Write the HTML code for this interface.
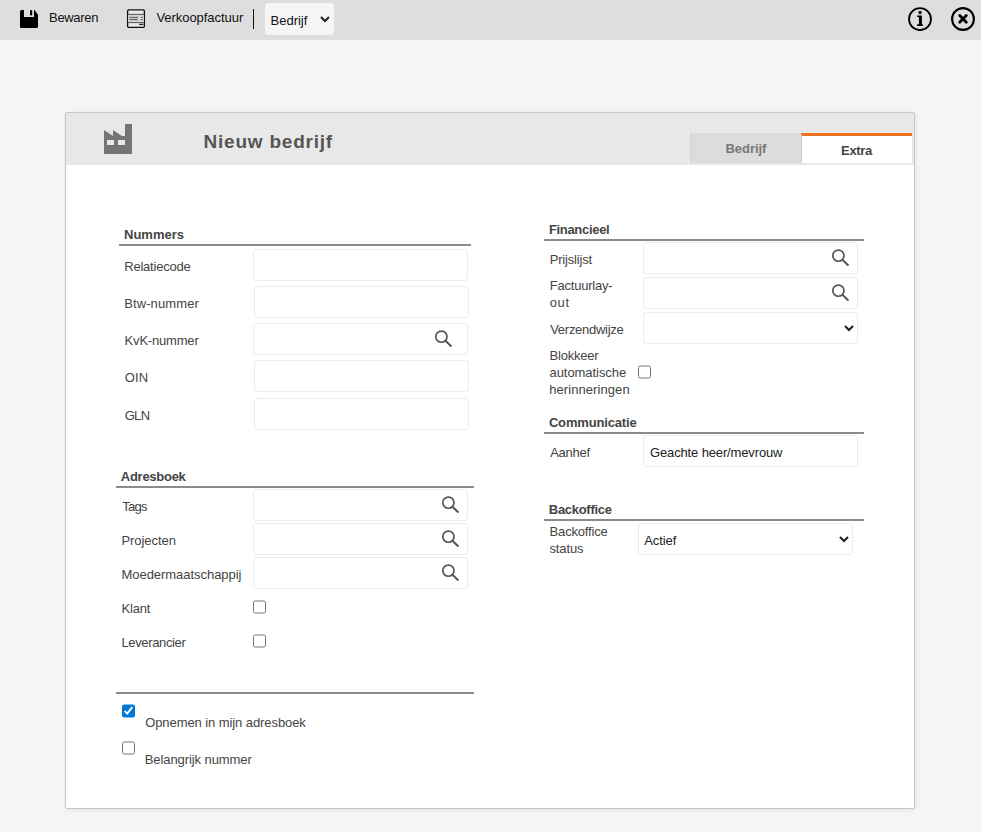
<!DOCTYPE html>
<html lang="nl">
<head>
<meta charset="utf-8">
<title>Nieuw bedrijf</title>
<style>
html,body{margin:0;padding:0;}
body{width:981px;height:832px;overflow:hidden;background:#f5f5f5;font-family:"Liberation Sans",Arial,sans-serif;font-size:13px;color:#444;position:relative;}
.t{position:absolute;white-space:nowrap;line-height:normal;}
.abs{position:absolute;}
#toolbar{position:absolute;left:0;top:0;width:981px;height:40px;background:#dedede;}
#panel{position:absolute;left:65px;top:112px;width:848px;height:695px;background:#fff;border:1px solid #c6c6c6;border-radius:2px;box-shadow:1px 1px 5px rgba(0,0,0,.07);}
#phead{position:absolute;left:66px;top:113px;width:848px;height:52px;background:#e8e8e8;}
.tab{position:absolute;height:30px;}
.rule{position:absolute;height:2px;background:#8b8b8b;}
.inp{position:absolute;box-sizing:border-box;width:215px;height:32px;border:1px solid #ececec;border-radius:3px;background:#fff;}
input.inp,select.inp{font-family:"Liberation Sans",Arial,sans-serif;font-size:13px;color:#222;padding:0 0 0 6px;margin:0;outline:none;}
select{-webkit-appearance:none;appearance:none;}
select.inp{padding-left:6px;}
.chev{position:absolute;width:12px;height:8px;}
.cbw{position:absolute;padding:2px;width:13px;height:13px;}
.cbw input{-webkit-appearance:none;appearance:none;box-sizing:border-box;border:1px solid #767676;border-radius:2.2px;background:#fff;}
.cbw input:checked{border:0;background:#0078d7;}
.cbw svg{position:absolute;left:2px;top:2px;width:13px;height:13px;}
input[type=checkbox]{position:absolute;margin:0;width:13px;height:13px;accent-color:#0078d7;}
.mag{position:absolute;width:18px;height:17px;}
</style>
</head>
<body>
<div id="toolbar"></div>
<!-- save icon -->
<svg class="abs" style="left:20px;top:10px" width="18" height="18" viewBox="0 0 18 18"><path d="M1.5 0H4V7H14V0Q14.6 0 15 .6L17.5 4Q18 4.6 18 5.2V16.5a1.5 1.5 0 0 1-1.5 1.5H1.5a1.5 1.5 0 0 1-1.5-1.5V1.5a1.5 1.5 0 0 1 1.5-1.5Z" fill="#000"/><rect x="10" y="0" width="2.2" height="5.6" rx="1" fill="#000"/></svg>
<!-- invoice icon -->
<svg class="abs" style="left:126px;top:8px" width="20" height="21" viewBox="0 0 20 21">
<rect x="1.6" y="1.9" width="16.8" height="17.4" rx="1.1" fill="#e6e6e6" stroke="#111" stroke-width="1.3"/>
<rect x="2.3" y="6.9" width="15.4" height="7.6" fill="#d6d6d6"/>
<path d="M2 6.4H18M2 14.6H18" stroke="#555" stroke-width="1"/>
<path d="M3.4 9.4H12M3.4 11.6H12M14.9 9.4H16.7M14.9 11.6H16.7" stroke="#444" stroke-width=".9"/>
<path d="M13.6 16.4H16.8" stroke="#222" stroke-width="1.1" stroke-linecap="round"/>
</svg>
<div class="abs" style="left:253px;top:9px;width:1px;height:20px;background:#111"></div>
<select class="abs" id="topsel" style="left:265px;top:3px;width:69px;height:32px;box-sizing:border-box;border:0;border-radius:4px;background-color:#f5f5f5;font-family:'Liberation Sans',Arial,sans-serif;font-size:13px;color:#111;padding:2px 0 0 5.5px;margin:0;"><option>Bedrijf</option></select>
<!-- info / close -->
<svg class="abs" style="left:906px;top:5px" width="28" height="28" viewBox="0 0 28 28"><circle cx="14" cy="14.1" r="11" fill="none" stroke="#000" stroke-width="1.8"/><circle cx="14.05" cy="7.5" r="1.65" fill="#000"/><path d="M11.1 10.5H15.9V19.2H16.9V21H11.1V19.2H12.9V12.1H11.1Z" fill="#000"/></svg>
<svg class="abs" style="left:949px;top:5px" width="28" height="28" viewBox="0 0 28 28"><circle cx="14" cy="14" r="10.9" fill="none" stroke="#000" stroke-width="2.1"/><path d="M10.7 10.6L17.3 17.2M17.3 10.6L10.7 17.2" stroke="#000" stroke-width="2.8" stroke-linecap="round"/></svg>

<div id="panel"></div>
<div id="phead"></div>
<!-- factory icon -->
<svg class="abs" style="left:104px;top:124px" width="28" height="30" viewBox="0 0 28 30"><path d="M0 6L9 12V6L18 12H21V0H28V30H0Z" fill="#757575"/><rect x="3" y="16" width="7" height="5" fill="#e8e8e8"/><rect x="14" y="16" width="7" height="5" fill="#e8e8e8"/></svg>
<div class="tab" style="left:690px;top:133px;width:111px;background:#dcdcdc;border-left:1px solid #d0d0d0;box-sizing:border-box"></div>
<div class="tab" style="left:801px;top:133px;width:111px;background:#fff;border-top:3px solid #f07020;border-left:1px solid #ccc;box-sizing:border-box"></div>

<!-- rules -->
<div class="rule" style="left:119px;top:244px;width:352px"></div>
<div class="rule" style="left:116px;top:486px;width:358px"></div>
<div class="rule" style="left:116px;top:692px;width:358px"></div>
<div class="rule" style="left:544px;top:239px;width:320px"></div>
<div class="rule" style="left:544px;top:432px;width:320px"></div>
<div class="rule" style="left:544px;top:519px;width:320px"></div>

<!-- left inputs -->
<input class="inp" type="text" style="left:253px;top:249px">
<input class="inp" type="text" style="left:254px;top:286px">
<input class="inp" type="text" style="left:253px;top:323px">
<input class="inp" type="text" style="left:254px;top:360px">
<input class="inp" type="text" style="left:254px;top:398px">
<input class="inp" type="text" style="left:253px;top:489px">
<input class="inp" type="text" style="left:253px;top:523px">
<input class="inp" type="text" style="left:253px;top:557px">
<div class="cbw" style="left:251px;top:598px;transform:translateY(.5px)"><input type="checkbox"></div>
<div class="cbw" style="left:251px;top:632px;transform:translateY(.5px)"><input type="checkbox"></div>
<div class="cbw" style="left:120px;top:702px;transform:translateY(.45px)"><input type="checkbox" checked><svg viewBox="0 0 13 13"><path d="M2.6 6.4L5.3 9.2L10.2 2.7" fill="none" stroke="#fff" stroke-width="1.9"/></svg></div>
<div class="cbw" style="left:120px;top:739px;transform:translateY(.5px)"><input type="checkbox"></div>

<!-- right inputs -->
<input class="inp" type="text" style="left:643px;top:242px">
<input class="inp" type="text" style="left:643px;top:277px">
<select class="inp" style="left:643px;top:312px"><option></option></select>
<div class="cbw" style="left:636px;top:363px;transform:translateY(.5px)"><input type="checkbox"></div>
<input class="inp" type="text" value="Geachte heer/mevrouw" style="left:643px;top:435px;padding-top:2px;letter-spacing:-0.14px" id="aanhef">
<select class="inp" style="left:638px;top:523px;padding:3px 0 0 5.3px;letter-spacing:-0.1px" id="bosel"><option>Actief</option></select>

<!-- chevrons -->
<svg class="chev" style="left:318.9px;top:16.4px" viewBox="0 0 12 8"><path d="M2 1.1L6 5.1L10 1.1" fill="none" stroke="#222" stroke-width="2.1"/></svg>
<svg class="chev" style="left:842.9px;top:325.4px" viewBox="0 0 12 8"><path d="M2 1.1L6 5.1L10 1.1" fill="none" stroke="#222" stroke-width="2.1"/></svg>
<svg class="chev" style="left:837.9px;top:536.4px" viewBox="0 0 12 8"><path d="M2 1.1L6 5.1L10 1.1" fill="none" stroke="#222" stroke-width="2.1"/></svg>
<!-- magnifiers -->
<svg class="mag" style="left:434px;top:330px" viewBox="0 0 18 17"><circle cx="7.4" cy="6.65" r="5.6" fill="none" stroke="#555" stroke-width="1.7"/><path d="M11.7 11L16.9 15.9" stroke="#555" stroke-width="2" stroke-linecap="round"/></svg>
<svg class="mag" style="left:441px;top:496px" viewBox="0 0 18 17"><circle cx="7.4" cy="6.65" r="5.6" fill="none" stroke="#555" stroke-width="1.7"/><path d="M11.7 11L16.9 15.9" stroke="#555" stroke-width="2" stroke-linecap="round"/></svg>
<svg class="mag" style="left:441px;top:530px" viewBox="0 0 18 17"><circle cx="7.4" cy="6.65" r="5.6" fill="none" stroke="#555" stroke-width="1.7"/><path d="M11.7 11L16.9 15.9" stroke="#555" stroke-width="2" stroke-linecap="round"/></svg>
<svg class="mag" style="left:441px;top:564px" viewBox="0 0 18 17"><circle cx="7.4" cy="6.65" r="5.6" fill="none" stroke="#555" stroke-width="1.7"/><path d="M11.7 11L16.9 15.9" stroke="#555" stroke-width="2" stroke-linecap="round"/></svg>
<svg class="mag" style="left:831px;top:249px" viewBox="0 0 18 17"><circle cx="7.4" cy="6.65" r="5.6" fill="none" stroke="#555" stroke-width="1.7"/><path d="M11.7 11L16.9 15.9" stroke="#555" stroke-width="2" stroke-linecap="round"/></svg>
<svg class="mag" style="left:831px;top:284px" viewBox="0 0 18 17"><circle cx="7.4" cy="6.65" r="5.6" fill="none" stroke="#555" stroke-width="1.7"/><path d="M11.7 11L16.9 15.9" stroke="#555" stroke-width="2" stroke-linecap="round"/></svg>

<span class="t" id="t0" style="left:49.1px;top:9.9px;font-size:13px;color:#111;letter-spacing:-0.341px;">Bewaren</span>
<span class="t" id="t1" style="left:156.4px;top:9.9px;font-size:13px;color:#111;letter-spacing:-0.042px;">Verkoopfactuur</span>
<span class="t" id="t2" style="left:203.5px;top:130.8px;font-size:19px;color:#555;font-weight:700;letter-spacing:0.780px;">Nieuw bedrijf</span>
<span class="t" id="t3" style="left:725.5px;top:141.1px;font-size:13px;color:#777;font-weight:700;letter-spacing:-0.059px;">Bedrijf</span>
<span class="t" id="t4" style="left:841.1px;top:143.1px;font-size:13px;color:#444;font-weight:700;letter-spacing:-0.350px;">Extra</span>
<span class="t" id="t5" style="left:124.0px;top:226.9px;font-size:13px;color:#444;font-weight:700;letter-spacing:0.009px;">Nummers</span>
<span class="t" id="t6" style="left:124.2px;top:258.7px;font-size:13px;color:#444;letter-spacing:-0.200px;">Relatiecode</span>
<span class="t" id="t7" style="left:124.2px;top:296.2px;font-size:13px;color:#444;letter-spacing:0.105px;">Btw-nummer</span>
<span class="t" id="t8" style="left:124.6px;top:332.7px;font-size:13px;color:#444;letter-spacing:-0.189px;">KvK-nummer</span>
<span class="t" id="t9" style="left:124.7px;top:369.8px;font-size:13px;color:#444;letter-spacing:0.225px;">OIN</span>
<span class="t" id="t10" style="left:124.7px;top:407.9px;font-size:13px;color:#444;letter-spacing:-0.700px;">GLN</span>
<span class="t" id="t11" style="left:120.8px;top:468.8px;font-size:13px;color:#444;font-weight:700;letter-spacing:-0.270px;">Adresboek</span>
<span class="t" id="t12" style="left:122.2px;top:499.0px;font-size:13px;color:#444;letter-spacing:-0.700px;">Tags</span>
<span class="t" id="t13" style="left:121.5px;top:533.1px;font-size:13px;color:#444;letter-spacing:-0.064px;">Projecten</span>
<span class="t" id="t14" style="left:121.5px;top:567.2px;font-size:13px;color:#444;letter-spacing:-0.041px;">Moedermaatschappij</span>
<span class="t" id="t15" style="left:121.5px;top:601.0px;font-size:13px;color:#444;letter-spacing:-0.200px;">Klant</span>
<span class="t" id="t16" style="left:121.5px;top:634.5px;font-size:13px;color:#444;letter-spacing:-0.370px;">Leverancier</span>
<span class="t" id="t17" style="left:145.2px;top:714.9px;font-size:13px;color:#444;letter-spacing:-0.081px;">Opnemen in mijn adresboek</span>
<span class="t" id="t18" style="left:144.7px;top:751.7px;font-size:13px;color:#444;letter-spacing:-0.081px;">Belangrijk nummer</span>
<span class="t" id="t19" style="left:548.9px;top:222.2px;font-size:13px;color:#444;font-weight:700;letter-spacing:-0.311px;">Financieel</span>
<span class="t" id="t20" style="left:549.7px;top:251.8px;font-size:13px;color:#444;letter-spacing:-0.183px;">Prijslijst</span>
<span class="t" id="t21" style="left:549.7px;top:277.6px;font-size:13px;color:#444;letter-spacing:-0.205px;">Factuurlay-</span>
<span class="t" id="t22" style="left:549.7px;top:294.6px;font-size:13px;color:#444;letter-spacing:0.675px;">out</span>
<span class="t" id="t23" style="left:550.2px;top:321.7px;font-size:13px;color:#444;letter-spacing:-0.273px;">Verzendwijze</span>
<span class="t" id="t24" style="left:549.6px;top:347.8px;font-size:13px;color:#444;letter-spacing:-0.215px;">Blokkeer</span>
<span class="t" id="t25" style="left:549.5px;top:364.9px;font-size:13px;color:#444;letter-spacing:-0.059px;">automatische</span>
<span class="t" id="t26" style="left:549.2px;top:381.8px;font-size:13px;color:#444;letter-spacing:0.079px;">herinneringen</span>
<span class="t" id="t27" style="left:548.9px;top:414.9px;font-size:13px;color:#444;font-weight:700;letter-spacing:-0.159px;">Communicatie</span>
<span class="t" id="t28" style="left:550.2px;top:444.9px;font-size:13px;color:#444;letter-spacing:-0.260px;">Aanhef</span>
<span class="t" id="t29" style="left:548.8px;top:501.5px;font-size:13px;color:#444;font-weight:700;letter-spacing:-0.294px;">Backoffice</span>
<span class="t" id="t30" style="left:549.6px;top:523.9px;font-size:13px;color:#444;letter-spacing:-0.173px;">Backoffice</span>
<span class="t" id="t31" style="left:549.5px;top:541.0px;font-size:13px;color:#444;letter-spacing:-0.140px;">status</span>
</body>
</html>
